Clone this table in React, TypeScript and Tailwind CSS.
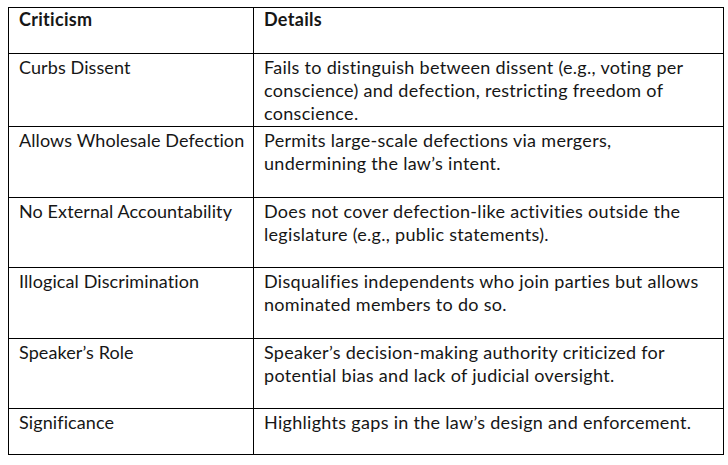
import React from "react";

const rows: { name: string; lines: string[]; h: string }[] = [
  {
    name: "Curbs Dissent",
    lines: [
      "Fails to distinguish between dissent (e.g., voting per",
      "conscience) and defection, restricting freedom of",
      "conscience.",
    ],
    h: "h-[73px]",
  },
  {
    name: "Allows Wholesale Defection",
    lines: ["Permits large-scale defections via mergers,", "undermining the law\u2019s intent."],
    h: "h-[71px]",
  },
  {
    name: "No External Accountability",
    lines: [
      "Does not cover defection-like activities outside the",
      "legislature (e.g., public statements).",
    ],
    h: "h-[70px]",
  },
  {
    name: "Illogical Discrimination",
    lines: ["Disqualifies independents who join parties but allows", "nominated members to do so."],
    h: "h-[71px]",
  },
  {
    name: "Speaker\u2019s Role",
    lines: [
      "Speaker\u2019s decision-making authority criticized for",
      "potential bias and lack of judicial oversight.",
    ],
    h: "h-[70px]",
  },
  {
    name: "Significance",
    lines: ["Highlights gaps in the law\u2019s design and enforcement."],
    h: "h-[46px]",
  },
];

const App = () => {
  return (
    <div className="w-[728px] h-[465px] bg-white pt-[7px] pl-[8px] font-['Lato',sans-serif] text-[18px] tracking-[0.3px] leading-[23px] text-[#161616]">
      <table className="w-[715px] border-collapse table-fixed">
        <colgroup>
          <col className="w-[245px]" />
          <col className="w-[470px]" />
        </colgroup>
        <tbody>
          <tr className="h-[46px]">
            <th className="border border-black align-top text-left font-bold pt-[0px] pl-[10px]">Criticism</th>
            <th className="border border-black align-top text-left font-bold pt-[0px] pl-[10px]">Details</th>
          </tr>
          {rows.map((r) => (
            <tr key={r.name} className={r.h}>
              <td className="border border-black align-top pt-[2px] pl-[10px] whitespace-nowrap tracking-[0.1px]">
                {r.name}
              </td>
              <td className="border border-black align-top pt-[2px] pl-[10px] whitespace-nowrap">
                {r.lines.map((l, i) => (
                  <div key={i}>{l}</div>
                ))}
              </td>
            </tr>
          ))}
        </tbody>
      </table>
    </div>
  );
};

export default App;
